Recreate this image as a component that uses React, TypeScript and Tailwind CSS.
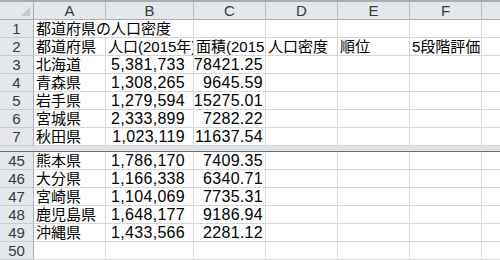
import React from 'react'

type Row = { n: number; cells: (string | null)[] }

const top: Row[] = [
  { n: 1, cells: ['都道府県の人口密度', null, null, null, null, null] },
  { n: 2, cells: ['都道府県', '人口(2015年)', '面積(2015年)', '人口密度', '順位', '5段階評価'] },
  { n: 3, cells: ['北海道', '5,381,733', '78421.25', null, null, null] },
  { n: 4, cells: ['青森県', '1,308,265', '9645.59', null, null, null] },
  { n: 5, cells: ['岩手県', '1,279,594', '15275.01', null, null, null] },
  { n: 6, cells: ['宮城県', '2,333,899', '7282.22', null, null, null] },
  { n: 7, cells: ['秋田県', '1,023,119', '11637.54', null, null, null] },
]

const bottom: Row[] = [
  { n: 45, cells: ['熊本県', '1,786,170', '7409.35', null, null, null] },
  { n: 46, cells: ['大分県', '1,166,338', '6340.71', null, null, null] },
  { n: 47, cells: ['宮崎県', '1,104,069', '7735.31', null, null, null] },
  { n: 48, cells: ['鹿児島県', '1,648,177', '9186.94', null, null, null] },
  { n: 49, cells: ['沖縄県', '1,433,566', '2281.12', null, null, null] },
  { n: 50, cells: [null, null, null, null, null, null] },
]

const widths = ['w-[72px]', 'w-[88px]', 'w-[72px]', 'w-[72px]', 'w-[72px]', 'w-[72px]']
const font = "font-['Liberation_Sans','Noto_Sans_CJK_JP',sans-serif]"

function isNum(s: string) {
  return /^[\d,.]+$/.test(s)
}

function SheetRow({ row }: { row: Row }) {
  return (
    <div className="flex h-[18px]">
      <div className="w-[34px] shrink-0 bg-[#e4e7eb] border-r border-b border-r-[#a9afb7] border-b-[#c9cdd2] flex items-center justify-center text-[15px] text-[#3a3a3a] leading-none">
        {row.n}
      </div>
      {row.cells.map((c, i) => {
        const merged = row.n === 1 && i === 0
        const num = c !== null && isNum(c)
        return (
          <div
            key={i}
            className={`${widths[i]} shrink-0 border-b border-[#d6d6d6] flex items-center leading-none whitespace-nowrap ${
              merged ? 'overflow-visible relative z-10' : 'border-r overflow-hidden'
            } ${num ? 'justify-end text-[16px] tracking-[0.3px]' : 'text-[15px] pl-[2px]'} ${
              num && i === 1 ? 'pr-[8px]' : num ? 'pr-[2px]' : ''
            }`}
          >
            {c}
          </div>
        )
      })}
      <div className="flex-1 border-b border-[#d6d6d6]" />
    </div>
  )
}

export default function App() {
  return (
    <div className={`w-[500px] h-[260px] overflow-hidden bg-white text-black ${font}`}>
      <div className="flex h-[20px] border-t-2 border-[#a6adb5] bg-[#e4e7eb]">
        <div className="relative w-[34px] shrink-0 border-r border-b border-[#a9afb7]">
          <div className="absolute right-[3px] bottom-[3px] w-0 h-0 border-l-[9px] border-l-transparent border-b-[9px] border-b-[#c4c8cd]" />
        </div>
        {['A', 'B', 'C', 'D', 'E', 'F'].map((l, i) => (
          <div
            key={l}
            className={`${widths[i]} shrink-0 border-r border-b border-r-[#b7bcc3] border-b-[#a9afb7] flex items-center justify-center text-[15px] text-[#3a3a3a] leading-none`}
          >
            {l}
          </div>
        ))}
        <div className="flex-1 border-b border-[#a9afb7]" />
      </div>
      {top.map(r => (
        <SheetRow key={r.n} row={r} />
      ))}
      <div className="h-[6px] bg-[#dfe3ea] border-b border-[#6e6e6e]" />
      {bottom.map(r => (
        <SheetRow key={r.n} row={r} />
      ))}
    </div>
  )
}
